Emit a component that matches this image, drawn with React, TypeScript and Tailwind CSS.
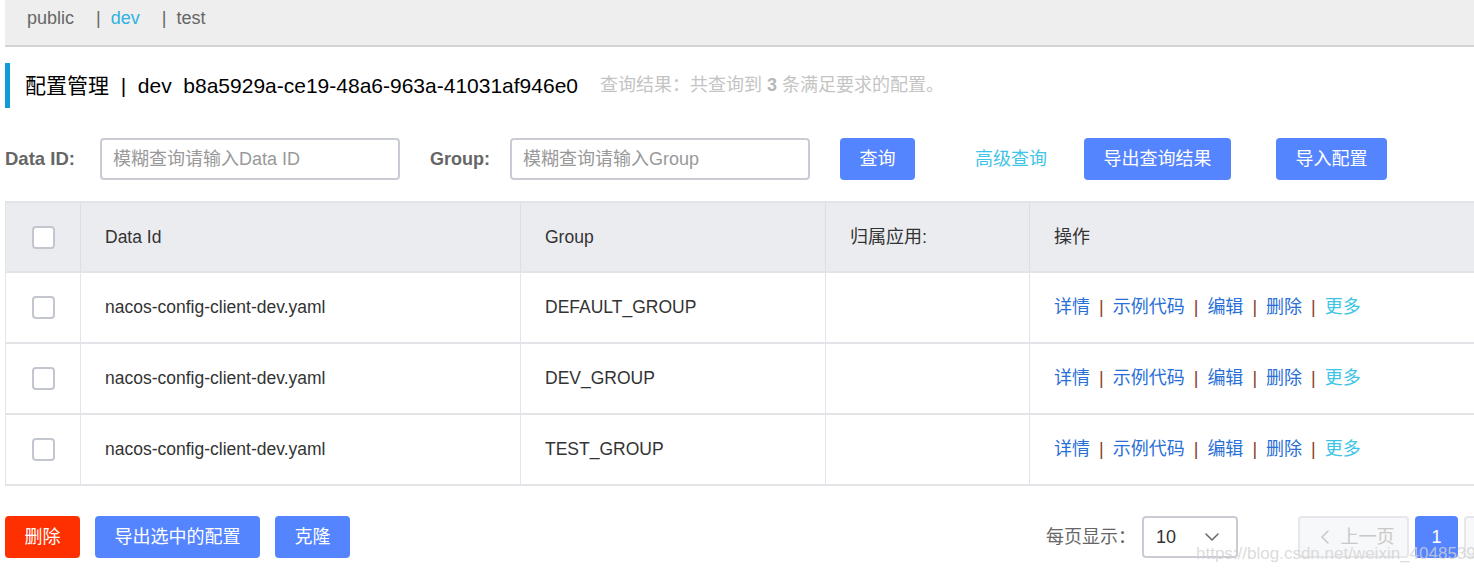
import { ChevronDown, ChevronLeft } from "lucide-react";

type Row = {
  dataId: string;
  group: string;
  app: string;
};

const rows: Row[] = [
  { dataId: "nacos-config-client-dev.yaml", group: "DEFAULT_GROUP", app: "" },
  { dataId: "nacos-config-client-dev.yaml", group: "DEV_GROUP", app: "" },
  { dataId: "nacos-config-client-dev.yaml", group: "TEST_GROUP", app: "" },
];

const Checkbox = () => (
  <span className="block h-[23px] w-[23px] rounded-[4px] border-2 border-[#c4c6cf] bg-white" />
);

const Sep = () => <span className="px-[9px] text-[#8a3b2c]">|</span>;

const Actions = () => (
  <div className="flex items-center text-[18px] text-[#2a6fd6]">
    <span>详情</span>
    <Sep />
    <span>示例代码</span>
    <Sep />
    <span>编辑</span>
    <Sep />
    <span>删除</span>
    <Sep />
    <span className="text-[#3ec4e6]">更多</span>
  </div>
);

const TableRow = ({ data }: { data: Row }) => (
  <div className="flex h-[71px] border-b-2 border-[#e3e4e8] text-[#333]">
    <div className="flex w-[75px] items-center justify-center border-r border-[#e3e4e8]">
      <Checkbox />
    </div>
    <div className="flex w-[440px] items-center border-r border-[#e3e4e8] pl-[24px]">
      {data.dataId}
    </div>
    <div className="flex w-[305px] items-center border-r border-[#e3e4e8] pl-[24px]">
      {data.group}
    </div>
    <div className="flex w-[204px] items-center border-r border-[#e3e4e8] pl-[24px]">
      {data.app}
    </div>
    <div className="flex flex-1 items-center pl-[24px]">
      <Actions />
    </div>
  </div>
);

export default function App() {
  return (
    <div
      className="relative h-[573px] w-[1474px] overflow-hidden bg-white text-[17.5px]"
      style={{ fontFamily: '"Liberation Sans", "Noto Sans CJK SC", sans-serif' }}
    >
      <div className="w-[1580px] pl-[5px]">
        {/* namespace bar */}
        <div className="flex h-[47px] items-start border-b-2 border-[#d4d4d4] bg-[#eeeeee] pt-[5px] text-[18px] text-[#666]">
          <span className="ml-[22px]">public</span>
          <span className="ml-[22px]">
            |<span className="ml-[10px] text-[#2fb3e0]">dev</span>
          </span>
          <span className="ml-[22px]">
            |<span className="ml-[10px]">test</span>
          </span>
        </div>

        {/* title */}
        <div className="mt-[16px] flex h-[45px] items-center border-l-[5px] border-[#0e9bd6] pl-[15px]">
          <span className="text-[21px] text-black">
            配置管理&nbsp;&nbsp;|&nbsp;&nbsp;dev&nbsp;&nbsp;b8a5929a-ce19-48a6-963a-41031af946e0
          </span>
          <span className="ml-[22px] text-[18px] text-[#c4c4c4]">
            查询结果：共查询到 <b className="text-[#b8b8b8]">3</b> 条满足要求的配置。
          </span>
        </div>

        {/* search form */}
        <div className="mt-[30px] flex h-[42px] items-center">
          <span className="w-[95px] text-[18.5px] font-bold text-[#666]">Data ID:</span>
          <div className="flex h-[42px] w-[300px] items-center rounded-[4px] border-2 border-[#c9ccd4] pl-[11px] text-[18px] text-[#999]">
            模糊查询请输入Data ID
          </div>
          <span className="ml-[30px] w-[80px] text-[18px] font-bold text-[#666]">Group:</span>
          <div className="flex h-[42px] w-[300px] items-center rounded-[4px] border-2 border-[#c9ccd4] pl-[11px] text-[18px] text-[#999]">
            模糊查询请输入Group
          </div>
          <button className="ml-[30px] h-[42px] w-[75px] rounded-[4px] bg-[#5584ff] text-[18px] text-white">
            查询
          </button>
          <span className="ml-[60px] text-[18px] text-[#3ec4e6]">高级查询</span>
          <button className="ml-[37px] h-[42px] w-[147px] rounded-[4px] bg-[#5584ff] text-[18px] text-white">
            导出查询结果
          </button>
          <button className="ml-[45px] h-[42px] w-[111px] rounded-[4px] bg-[#5584ff] text-[18px] text-white">
            导入配置
          </button>
        </div>

        {/* table */}
        <div className="mt-[21px] border-l border-t-2 border-[#e3e4e8]">
          <div className="flex h-[70px] border-b-2 border-[#e3e4e8] bg-[#ebecf0] text-[#333]">
            <div className="flex w-[75px] items-center justify-center border-r border-[#dcdee3]">
              <Checkbox />
            </div>
            <div className="flex w-[440px] items-center border-r border-[#dcdee3] pl-[24px]">
              Data Id
            </div>
            <div className="flex w-[305px] items-center border-r border-[#dcdee3] pl-[24px]">
              Group
            </div>
            <div className="flex w-[204px] items-center border-r border-[#dcdee3] pl-[24px] text-[18px]">
              归属应用:
            </div>
            <div className="flex flex-1 items-center pl-[24px] text-[18px]">操作</div>
          </div>
          {rows.map((r, i) => (
            <TableRow key={i} data={r} />
          ))}
        </div>

        {/* footer */}
        <div className="mt-[30px] flex h-[42px] items-center text-[18px]">
          <button className="h-[42px] w-[75px] rounded-[4px] bg-[#ff3000] text-white">删除</button>
          <button className="ml-[15px] h-[42px] w-[165px] rounded-[4px] bg-[#5584ff] text-white">
            导出选中的配置
          </button>
          <button className="ml-[15px] h-[42px] w-[75px] rounded-[4px] bg-[#5584ff] text-white">
            克隆
          </button>

          <span className="ml-[696px] text-[#666]">每页显示：</span>
          <div className="ml-[6px] flex h-[42px] w-[96px] items-center justify-between rounded-[4px] border-2 border-[#c9ccd4] pl-[12px] pr-[12px] text-[#333]">
            <span>10</span>
            <ChevronDown size={24} strokeWidth={1.5} className="text-[#666]" />
          </div>
          <button className="ml-[60px] flex h-[42px] w-[111px] items-center justify-center gap-[4px] rounded-[4px] border-2 border-[#e6e7eb] bg-[#f7f8fa] text-[#c8c8c8]">
            <ChevronLeft size={24} strokeWidth={1.5} />
            上一页
          </button>
          <button className="ml-[6px] h-[42px] w-[43px] rounded-[4px] bg-[#5584ff] text-white">1</button>
          <button className="ml-[6px] h-[42px] w-[111px] rounded-[4px] border-2 border-[#e6e7eb] bg-[#f7f8fa] text-[#c8c8c8]">
            下一页
          </button>
        </div>
      </div>

      {/* watermark */}
      <span className="absolute left-[1196px] top-[541px] text-[17px] text-[#d2d2d2]/80">
        https://blog.csdn.net/weixin_40485391
      </span>
    </div>
  );
}
